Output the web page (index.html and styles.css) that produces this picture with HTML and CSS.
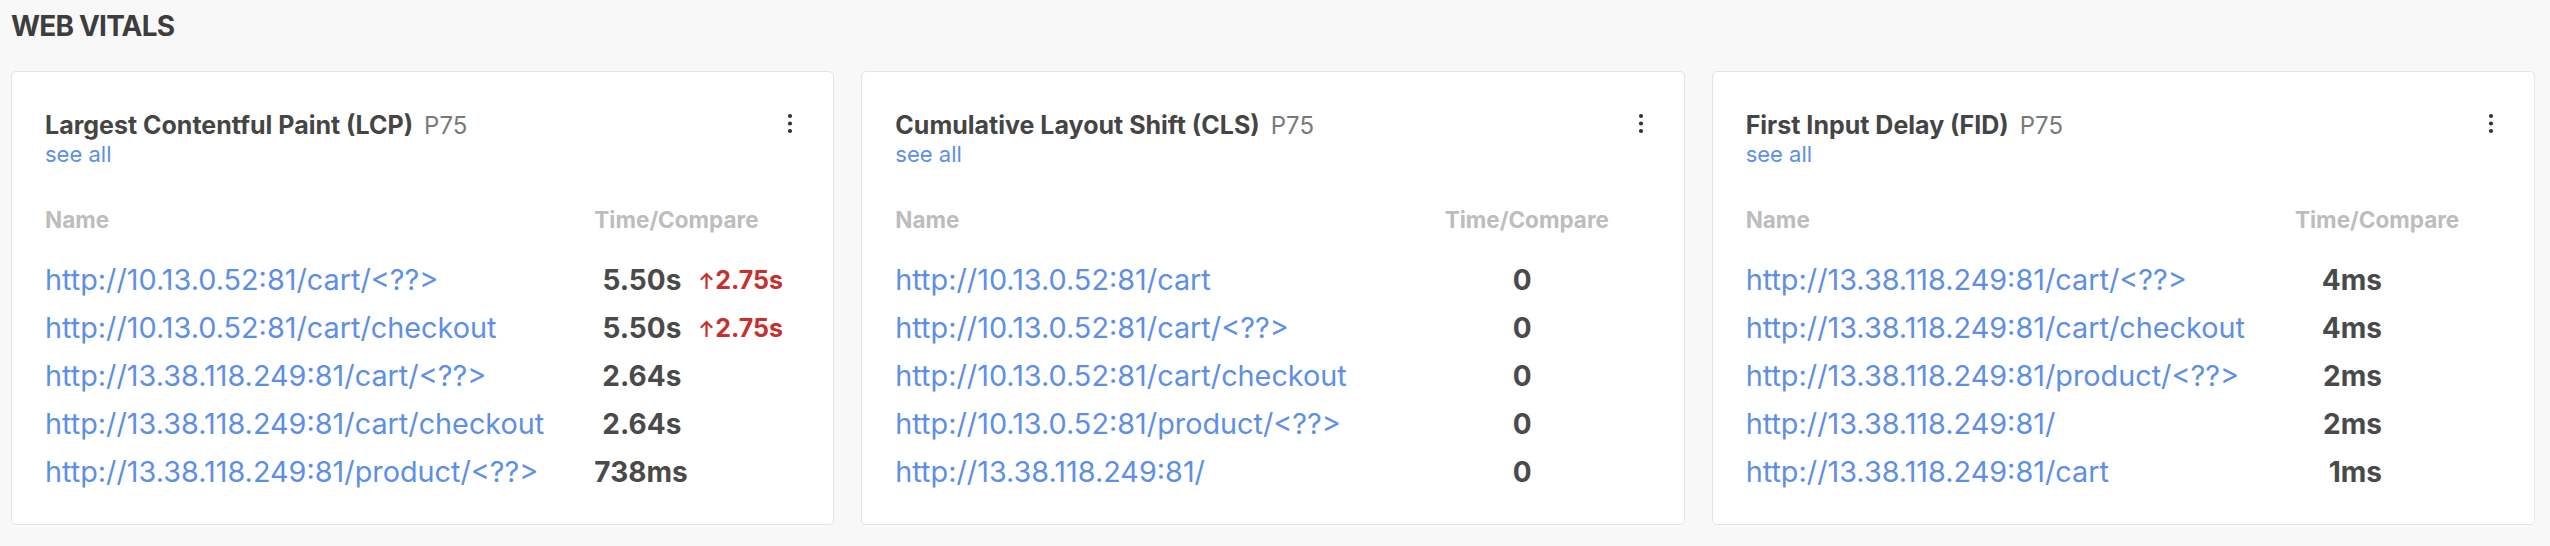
FILE: index.html
```html
<!DOCTYPE html>
<html lang="en">
<head>
<meta charset="utf-8">
<title>Web Vitals</title>
<link rel="stylesheet" href="styles.css">
</head>
<body>
<div class="page">
  <h2 class="section-title">WEB VITALS</h2>
  <div class="cards">
    <section class="card">
      <div class="card-head">
        <div class="card-title-wrap">
          <div class="card-title"><span class="metric">Largest Contentful Paint (LCP)</span><span class="pct">P75</span></div>
          <a class="see-all" href="#">see all</a>
        </div>
        <svg class="kebab" viewBox="0 0 20 28" width="20" height="28"><circle cx="10" cy="5" r="2.1"/><circle cx="10" cy="12.5" r="2.1"/><circle cx="10" cy="20" r="2.1"/></svg>
      </div>
      <div class="table">
        <div class="th name-col">Name</div>
        <div class="th time-col">Time/Compare</div>
        <a class="url" href="#">http://10.13.0.52:81/cart/&lt;??&gt;</a><div class="val">5.50s</div><div class="cmp"><svg class="up" viewBox="0 0 15 17" width="15" height="17"><path d="M7.5 17V2M1.8 7.7L7.5 2l5.7 5.7"/></svg>2.75s</div>
        <a class="url" href="#">http://10.13.0.52:81/cart/checkout</a><div class="val">5.50s</div><div class="cmp"><svg class="up" viewBox="0 0 15 17" width="15" height="17"><path d="M7.5 17V2M1.8 7.7L7.5 2l5.7 5.7"/></svg>2.75s</div>
        <a class="url" href="#">http://13.38.118.249:81/cart/&lt;??&gt;</a><div class="val">2.64s</div><div class="cmp"></div>
        <a class="url" href="#">http://13.38.118.249:81/cart/checkout</a><div class="val">2.64s</div><div class="cmp"></div>
        <a class="url" href="#">http://13.38.118.249:81/product/&lt;??&gt;</a><div class="val">738ms</div><div class="cmp"></div>
      </div>
    </section>
    <section class="card">
      <div class="card-head">
        <div class="card-title-wrap">
          <div class="card-title"><span class="metric">Cumulative Layout Shift (CLS)</span><span class="pct">P75</span></div>
          <a class="see-all" href="#">see all</a>
        </div>
        <svg class="kebab" viewBox="0 0 20 28" width="20" height="28"><circle cx="10" cy="5" r="2.1"/><circle cx="10" cy="12.5" r="2.1"/><circle cx="10" cy="20" r="2.1"/></svg>
      </div>
      <div class="table">
        <div class="th name-col">Name</div>
        <div class="th time-col">Time/Compare</div>
        <a class="url" href="#">http://10.13.0.52:81/cart</a><div class="val">0</div><div class="cmp"></div>
        <a class="url" href="#">http://10.13.0.52:81/cart/&lt;??&gt;</a><div class="val">0</div><div class="cmp"></div>
        <a class="url" href="#">http://10.13.0.52:81/cart/checkout</a><div class="val">0</div><div class="cmp"></div>
        <a class="url" href="#">http://10.13.0.52:81/product/&lt;??&gt;</a><div class="val">0</div><div class="cmp"></div>
        <a class="url" href="#">http://13.38.118.249:81/</a><div class="val">0</div><div class="cmp"></div>
      </div>
    </section>
    <section class="card">
      <div class="card-head">
        <div class="card-title-wrap">
          <div class="card-title"><span class="metric">First Input Delay (FID)</span><span class="pct">P75</span></div>
          <a class="see-all" href="#">see all</a>
        </div>
        <svg class="kebab" viewBox="0 0 20 28" width="20" height="28"><circle cx="10" cy="5" r="2.1"/><circle cx="10" cy="12.5" r="2.1"/><circle cx="10" cy="20" r="2.1"/></svg>
      </div>
      <div class="table">
        <div class="th name-col">Name</div>
        <div class="th time-col">Time/Compare</div>
        <a class="url" href="#">http://13.38.118.249:81/cart/&lt;??&gt;</a><div class="val">4ms</div><div class="cmp"></div>
        <a class="url" href="#">http://13.38.118.249:81/cart/checkout</a><div class="val">4ms</div><div class="cmp"></div>
        <a class="url" href="#">http://13.38.118.249:81/product/&lt;??&gt;</a><div class="val">2ms</div><div class="cmp"></div>
        <a class="url" href="#">http://13.38.118.249:81/</a><div class="val">2ms</div><div class="cmp"></div>
        <a class="url" href="#">http://13.38.118.249:81/cart</a><div class="val">1ms</div><div class="cmp"></div>
      </div>
    </section>
  </div>
</div>
</body>
</html>
```
FILE: styles.css
```css
html, body {
  margin: 0;
  padding: 0;
  background: #f8f8f8;
}
body {
  font-family: Inter, "Liberation Sans", Arial, sans-serif;
  color: #444;
  width: 2550px;
  height: 546px;
  overflow: hidden;
}
.page {
  padding: 12px 15px 0 11px;
}
.section-title {
  margin: 0 0 31px 0;
  font-size: 28px;
  line-height: 28px;
  font-weight: 700;
  color: #3d3d3d;
  letter-spacing: -0.8px;
}
.cards {
  display: grid;
  grid-template-columns: repeat(3, 1fr);
  gap: 27px;
}
.card {
  background: #fff;
  border: 1px solid #e4e4e4;
  border-radius: 5px;
  padding: 39px 33px 31px 33px;
  box-sizing: border-box;
  height: 454px;
}
.card-head {
  display: flex;
  justify-content: space-between;
  align-items: flex-start;
}
.card-title {
  font-size: 25px;
  line-height: 28px;
  white-space: nowrap;
}
.metric {
  font-weight: 700;
  color: #454545;
}
.pct {
  font-size: 24px;
  color: #7a7a7a;
  margin-left: 11px;
}
.see-all {
  display: block;
  font-size: 22px;
  line-height: 28px;
  color: #5d8fe6;
  text-decoration: none;
}
.kebab {
  display: block;
  fill: #333;
}
.table {
  display: grid;
  grid-template-columns: 1fr 87px 119px;
  margin-top: 38px;
}
.th {
  font-size: 22.5px;
  line-height: 28px;
  font-weight: 700;
  color: #bdbdbd;
  margin-bottom: 22px;
}
.time-col {
  grid-column: 2 / 4;
  white-space: nowrap;
}
.url {
  font-size: 28.8px;
  line-height: 48px;
  color: #5d8fe6;
  text-decoration: none;
  white-space: nowrap;
}
.val {
  font-size: 28px;
  line-height: 48px;
  font-weight: 700;
  color: #4a4a4a;
  text-align: right;
  white-space: nowrap;
}
.cmp {
  font-size: 25px;
  line-height: 48px;
  font-weight: 700;
  color: #c9302c;
  padding-left: 18px;
  white-space: nowrap;
}
.up {
  display: inline-block;
  vertical-align: baseline;
  fill: none;
  stroke: #c9302c;
  stroke-width: 2.2;
  margin-right: 1px;
}
```
